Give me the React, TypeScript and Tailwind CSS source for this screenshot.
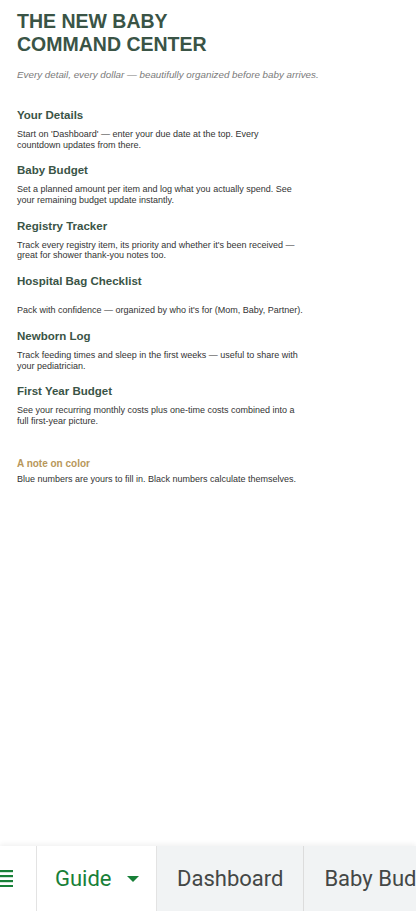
import React from "react";

type Section = { title: string; body: string[]; gapBefore?: boolean };

const sections: Section[] = [
  {
    title: "Your Details",
    body: [
      "Start on 'Dashboard' — enter your due date at the top. Every",
      "countdown updates from there.",
    ],
  },
  {
    title: "Baby Budget",
    body: [
      "Set a planned amount per item and log what you actually spend. See",
      "your remaining budget update instantly.",
    ],
  },
  {
    title: "Registry Tracker",
    body: [
      "Track every registry item, its priority and whether it's been received —",
      "great for shower thank-you notes too.",
    ],
  },
  {
    title: "Hospital Bag Checklist",
    body: ["Pack with confidence — organized by who it's for (Mom, Baby, Partner)."],
    gapBefore: true,
  },
  {
    title: "Newborn Log",
    body: [
      "Track feeding times and sleep in the first weeks — useful to share with",
      "your pediatrician.",
    ],
  },
  {
    title: "First Year Budget",
    body: [
      "See your recurring monthly costs plus one-time costs combined into a",
      "full first-year picture.",
    ],
  },
];

function SheetTab({ label, active }: { label: string; active?: boolean }) {
  if (active) {
    return (
      <div className="flex h-full w-[121px] shrink-0 items-center border-x border-[#e3e3e3] bg-white pl-[18px]">
        <span className="text-[22px] leading-none text-[#188038]" style={{ fontFamily: "Roboto, 'Open Sans', sans-serif" }}>
          {label}
        </span>
        <svg width="12" height="7" viewBox="0 0 12 7" className="ml-[15px] mt-[2px]">
          <path d="M0 0 L12 0 L6 6 Z" fill="#188038" />
        </svg>
      </div>
    );
  }
  return (
    <div className="flex h-full shrink-0 items-center border-r border-[#dcdcdc] bg-[#f1f3f4] px-[20px]">
      <span className="whitespace-nowrap text-[22px] leading-none text-[#444746]" style={{ fontFamily: "Roboto, 'Open Sans', sans-serif" }}>
        {label}
      </span>
    </div>
  );
}

export default function App() {
  return (
    <div className="flex h-[911px] w-[416px] flex-col overflow-hidden bg-white" style={{ fontFamily: "'Liberation Sans', Arial, sans-serif" }}>
      <div className="flex-1 pl-[17px] pt-[10px]">
        <h1 className="text-[19.5px] font-bold leading-[23px] text-[#3a5446]">
          THE NEW BABY
          <br />
          COMMAND CENTER
        </h1>
        <p className="mt-[13px] text-[9.8px] italic leading-[12px] text-[#7a7a7a]">
          Every detail, every dollar — beautifully organized before baby arrives.
        </p>

        <div className="mt-[27px] flex flex-col">
          {sections.map((s, i) => (
            <div key={s.title} className={i === 0 ? "" : "mt-[13.3px]"}>
              <h2 className="text-[11.5px] font-bold leading-[14px] text-[#3a5446]">{s.title}</h2>
              <div className={s.gapBefore ? "mt-[17.5px]" : "mt-[7px]"}>
                {s.body.map((line) => (
                  <p key={line} className="text-[9px] leading-[10.5px] text-[#333]">
                    {line}
                  </p>
                ))}
              </div>
            </div>
          ))}
        </div>

        <div className="mt-[31.5px]">
          <h3 className="text-[10px] font-bold leading-[12px] text-[#b8975a]">A note on color</h3>
          <p className="mt-[4.5px] text-[9px] leading-[10.5px] text-[#333]">
            Blue numbers are yours to fill in. Black numbers calculate themselves.
          </p>
        </div>
      </div>

      <div className="relative flex h-[65px] shrink-0 items-stretch bg-white shadow-[0_-2px_5px_rgba(0,0,0,0.06)]">
        <div className="flex w-[36px] shrink-0 items-center">
          <svg width="13" height="17" viewBox="0 0 13 17">
            <rect x="0" y="0" width="13" height="2.2" fill="#188038" />
            <rect x="0" y="5" width="13" height="2.2" fill="#188038" />
            <rect x="0" y="10" width="13" height="2.2" fill="#188038" />
            <rect x="0" y="15" width="13" height="2.2" fill="#188038" />
          </svg>
        </div>
        <SheetTab label="Guide" active />
        <SheetTab label="Dashboard" />
        <SheetTab label="Baby Budget" />
      </div>
    </div>
  );
}
